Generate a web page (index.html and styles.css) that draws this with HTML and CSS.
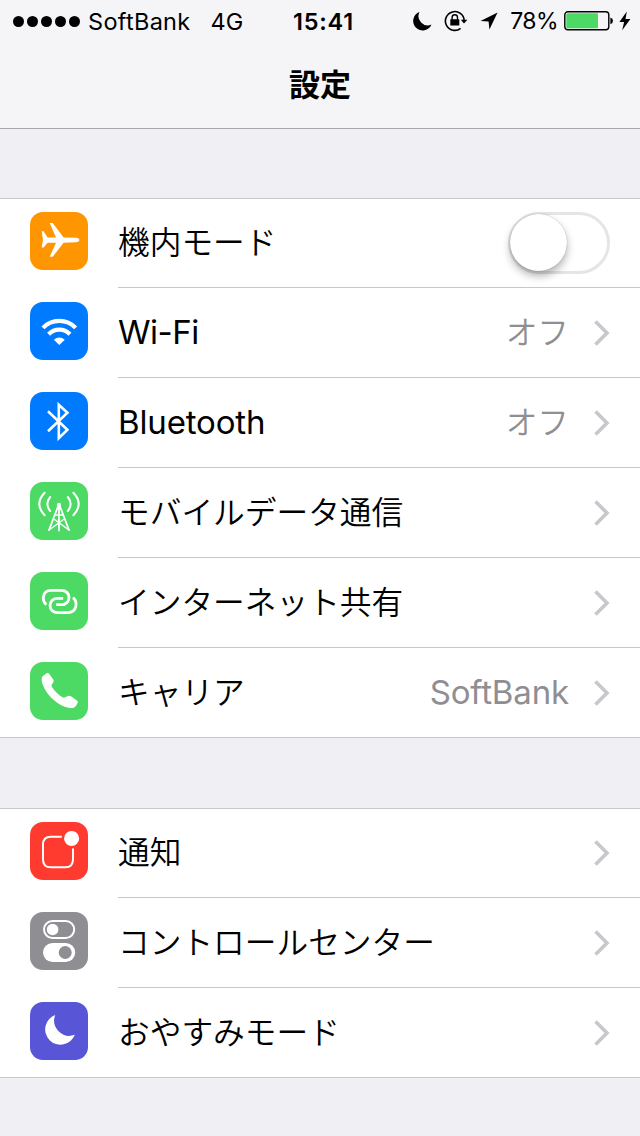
FILE: index.html
```html
<!DOCTYPE html>
<html lang="ja">
<head>
    <meta charset="UTF-8">
    <meta name="viewport" content="width=device-width, initial-scale=1.0">
    <title>設定</title>
    <link rel="stylesheet" href="styles.css">
</head>
<body>
    <header>
        <div class="status-bar">
            <div class="status-left">
                <div class="signal"><i></i><i></i><i></i><i></i><i></i></div>
                <span class="carrier">SoftBank</span>
                <span class="network">4G</span>
            </div>
            <div class="status-time">15:41</div>
            <div class="status-right">
                <svg class="dnd" width="19" height="20" viewBox="0 0 19 20">
                    <path d="M6.5 1A9.5 9.5 0 1 0 18.5 13.5A9.2 9.2 0 0 1 6.5 1Z"/>
                </svg>
                <svg class="lock" width="24" height="22" viewBox="0 0 24 22">
                    <path d="M20.2 10.5A9.4 9.4 0 1 0 16.6 18.4" fill="none" stroke="#000" stroke-width="1.6"/>
                    <path d="M16.8 9.7H23.4L20 13.6Z"/>
                    <rect x="6.3" y="9.2" width="9" height="6.4" rx="0.6"/>
                    <path d="M8.1 10V7.4A2.7 2.7 0 0 1 13.5 7.4V10" fill="none" stroke="#000" stroke-width="1.4"/>
                </svg>
                <svg class="location" width="18" height="18" viewBox="0 0 18 18">
                    <path d="M17.6 0.4L0.5 8.9L8.6 9.4L9.4 17.4Z"/>
                </svg>
                <span class="percent">78%</span>
                <svg class="battery" width="50" height="20" viewBox="0 0 50 20">
                    <rect x="0.8" y="0.8" width="44" height="18" rx="3" fill="none" stroke="#000" stroke-width="1.4"/>
                    <rect x="2.3" y="2.3" width="31.7" height="15" rx="1.4" fill="#4cd964"/>
                    <path d="M46.4 6.4Q49 7 49 9.8Q49 12.6 46.4 13.2Z"/>
                </svg>
                <svg class="bolt" width="12" height="20" viewBox="0 0 12 20">
                    <path d="M7.8 0.5L0.4 11H5.1L3.2 19.3L11.4 8H6.5Z"/>
                </svg>
            </div>
        </div>
        <h1>設定</h1>
    </header>

    <main>
        <ul class="group">
            <li class="row">
                <svg class="icon orange" viewBox="0 0 58 58">
                    <path d="M11.7 19.3H13.6L17.6 25.4H26L19.7 11H22.7L33.6 25.4L46 25.8Q49.4 26.4 49.4 28Q49.4 29.7 46 30.3L33.6 30.7L22.7 44.8H19.7L26 30.7H17.6L13.6 35.6H11.7L13 28Z" fill="#fff"/>
                </svg>
                <div class="row-body">
                    <span class="label">機内モード</span>
                    <div class="toggle"></div>
                </div>
            </li>
            <li class="row">
                <svg class="icon blue" viewBox="0 0 58 58">
                    <path d="M13 25.9A22.5 22.5 0 0 1 45.6 25.9" fill="none" stroke="#fff" stroke-width="4.2"/>
                    <path d="M18.6 32.2A15 15 0 0 1 40 32.2" fill="none" stroke="#fff" stroke-width="4.2"/>
                    <path d="M23.8 37.7Q29.3 33.2 34.8 37.7L29.3 43Z" fill="#fff"/>
                </svg>
                <div class="row-body">
                    <span class="label latin wifi">Wi-Fi</span>
                    <span class="value">オフ</span>
                    <svg class="chevron" viewBox="0 0 16 26"><path d="M1.5 1.5L13 13L1.5 24.5"/></svg>
                </div>
            </li>
            <li class="row">
                <svg class="icon blue" viewBox="0 0 58 58">
                    <path d="M18 19.3L37.4 37.8L28.8 46.2V12.7L37.4 20.8L18 39.2" fill="none" stroke="#fff" stroke-width="2.6"/>
                </svg>
                <div class="row-body">
                    <span class="label latin">Bluetooth</span>
                    <span class="value">オフ</span>
                    <svg class="chevron" viewBox="0 0 16 26"><path d="M1.5 1.5L13 13L1.5 24.5"/></svg>
                </div>
            </li>
            <li class="row">
                <svg class="icon green" viewBox="0 0 58 58">
                    <g fill="none" stroke="#fff" stroke-width="2" stroke-linecap="round">
                        <path d="M14.6 10.8Q4 22 14.6 33.2"/>
                        <path d="M43.4 10.8Q54 22 43.4 33.2"/>
                        <path d="M20.2 15Q14.5 22 20.2 29"/>
                        <path d="M37.8 15Q43.5 22 37.8 29"/>
                        <path d="M28.2 24L19 48M29.8 24L39 48M29 23V48.5" stroke-width="1.8"/>
                        <path d="M25.3 33H32.7M19 48L33.5 37.5M39 48L24.5 37.5" stroke-width="1.5"/>
                    </g>
                    <circle cx="29" cy="23" r="2.2" fill="#fff"/>
                </svg>
                <div class="row-body">
                    <span class="label">モバイルデータ通信</span>
                    <svg class="chevron" viewBox="0 0 16 26"><path d="M1.5 1.5L13 13L1.5 24.5"/></svg>
                </div>
            </li>
            <li class="row">
                <svg class="icon green" viewBox="0 0 58 58">
                    <g fill="none" stroke="#fff" stroke-width="2.8">
                        <path d="M16.4 32.6C11.4 28.5 12.4 18.4 21 18.4H31.5C35.8 18.4 39 21.4 39 25.3C39 29.2 36 32.7 32 32.7H26.2"/>
                        <path d="M43 25.6C48 29.7 47 40.6 38 40.6H27.5C23.2 40.6 20 37.6 20 33.7C20 29.8 23 26.3 27 26.3H33.2"/>
                    </g>
                </svg>
                <div class="row-body">
                    <span class="label">インターネット共有</span>
                    <svg class="chevron" viewBox="0 0 16 26"><path d="M1.5 1.5L13 13L1.5 24.5"/></svg>
                </div>
            </li>
            <li class="row">
                <svg class="icon green" viewBox="0 0 58 58">
                    <path d="M12.4 14.6L16.2 11.5Q18 10.4 19.3 12L23.3 17.4Q24.3 19 23.2 20.4L21.8 22.4Q21 23.6 21.9 25C24.6 29 28.6 32.8 32.4 35.2Q33.8 36 35.2 35.3L38 34.1Q39.5 33.5 41 34.3L47 38.4Q48.5 39.6 47.5 41.2L45.6 44.2Q44 46.5 40 46C26.5 44 13 29.5 11.7 18.2Q11.4 15.8 12.4 14.6Z" fill="#fff"/>
                </svg>
                <div class="row-body">
                    <span class="label">キャリア</span>
                    <span class="value latin">SoftBank</span>
                    <svg class="chevron" viewBox="0 0 16 26"><path d="M1.5 1.5L13 13L1.5 24.5"/></svg>
                </div>
            </li>
        </ul>

        <ul class="group">
            <li class="row">
                <svg class="icon red" viewBox="0 0 58 58">
                    <path d="M31.8 14.8H20.8Q13 14.8 13 22.6V37.4Q13 45.2 20.8 45.2H35.2Q43 45.2 43 37.4V26.6" fill="none" stroke="#fff" stroke-width="2"/>
                    <circle cx="41.6" cy="16.4" r="7.5" fill="#fff"/>
                </svg>
                <div class="row-body">
                    <span class="label">通知</span>
                    <svg class="chevron" viewBox="0 0 16 26"><path d="M1.5 1.5L13 13L1.5 24.5"/></svg>
                </div>
            </li>
            <li class="row">
                <svg class="icon gray" viewBox="0 0 58 58">
                    <rect x="14" y="9" width="30.2" height="17" rx="8.5" fill="none" stroke="#fff" stroke-width="2"/>
                    <circle cx="22.6" cy="17.5" r="5.8" fill="#fff"/>
                    <rect x="13" y="31" width="32.2" height="19" rx="9.5" fill="#fff"/>
                    <circle cx="35.2" cy="40.5" r="6.5" fill="#8e8e93"/>
                </svg>
                <div class="row-body">
                    <span class="label">コントロールセンター</span>
                    <svg class="chevron" viewBox="0 0 16 26"><path d="M1.5 1.5L13 13L1.5 24.5"/></svg>
                </div>
            </li>
            <li class="row">
                <svg class="icon purple" viewBox="0 0 58 58">
                    <path d="M25.3 13A15.3 15.3 0 1 0 44.8 32.8A15.2 15.2 0 0 1 25.3 13Z" fill="#fff"/>
                </svg>
                <div class="row-body">
                    <span class="label">おやすみモード</span>
                    <svg class="chevron" viewBox="0 0 16 26"><path d="M1.5 1.5L13 13L1.5 24.5"/></svg>
                </div>
            </li>
        </ul>
    </main>
</body>
</html>
```
FILE: styles.css
```css
:root {
    --bg-color: #efeff4;
    --bar-color: #f5f5f7;
    --line-color: #c8c7cc;
    --value-color: #8e8e93;
}

* {
    box-sizing: border-box;
}

body {
    margin: 0;
    min-height: 1136px;
    background-color: var(--bg-color);
    color: #000;
    font-family: Inter, "Noto Sans CJK JP", sans-serif;
}

header {
    height: 129px;
    background-color: var(--bar-color);
    border-bottom: 1px solid #a7a7ab;
}

/* Status bar */
.status-bar {
    display: grid;
    grid-template-columns: 1fr 70px 1fr;
    align-items: center;
    height: 41px;
    font-size: 23.5px;
    line-height: 41px;
    white-space: nowrap;
}

.status-left,
.status-right {
    display: flex;
    align-items: center;
}

.status-left {
    padding-left: 13px;
}

.signal {
    display: flex;
    gap: 3px;
    margin-right: 8px;
}

.signal i {
    width: 11px;
    height: 11px;
    border-radius: 50%;
    background-color: #000;
}

.carrier {
    margin-right: 20px;
    letter-spacing: 0.3px;
}

.status-time {
    padding-left: 7px;
    text-align: center;
    font-weight: 600;
    letter-spacing: 0.8px;
}

.status-right {
    justify-content: flex-end;
    padding-right: 9px;
}

.lock {
    margin-left: 12px;
}

.location {
    margin: 0 12px;
}

.percent {
    padding-top: 1px;
    font-size: 23px;
    letter-spacing: -0.6px;
}

.battery {
    margin: 0 5px 0 6px;
}

h1 {
    margin: 0;
    text-align: center;
    font-size: 31px;
    line-height: 83px;
    font-weight: 700;
    font-family: "Noto Sans CJK JP", sans-serif;
}

/* Settings list */
.group {
    list-style: none;
    margin: 69px 0 70px;
    padding: 0;
    background-color: #fff;
    box-shadow: inset 0 1px var(--line-color);
}

.group + .group {
    margin-top: 0;
}

.row {
    display: flex;
    height: 90px;
    padding-left: 30px;
}

.row:last-child {
    border-bottom: 1px solid var(--line-color);
}

.icon {
    flex: none;
    width: 58px;
    height: 58px;
    margin: 14px 30px 0 0;
    border-radius: 13px;
}

.orange { background-color: #ff9500; }
.blue { background-color: #007aff; }
.green { background-color: #4cd964; }
.red { background-color: #ff3b30; }
.gray { background-color: #8e8e93; }
.purple { background-color: #5856d6; }

.row-body {
    flex: 1;
    display: flex;
    align-items: center;
    padding-right: 30px;
    border-bottom: 1px solid var(--line-color);
}

.row:last-child .row-body {
    border-bottom: none;
}

.label,
.value {
    padding-bottom: 5px;
    font-family: "Noto Sans CJK JP DemiLight", "Noto Sans CJK JP", sans-serif;
    font-size: 31.7px;
    font-weight: 350;
    line-height: 44px;
    white-space: nowrap;
}

.label {
    flex: 1;
}

.value {
    color: var(--value-color);
}

.label.latin,
.value.latin {
    padding-bottom: 2px;
    font-family: Inter, sans-serif;
    font-size: 33px;
    font-weight: 400;
    letter-spacing: -0.15px;
}

.label.wifi {
    letter-spacing: -0.5px;
}

.chevron {
    width: 16px;
    height: 26px;
    margin-left: 25px;
    fill: none;
    stroke: #c7c7cc;
    stroke-width: 3.6;
}

.toggle {
    width: 102px;
    height: 62px;
    border: 3px solid #e5e5e5;
    border-radius: 31px;
}

.toggle::before {
    content: "";
    display: block;
    width: 57px;
    height: 57px;
    margin: -0.5px 0 0 -1px;
    border-radius: 50%;
    background-color: #fff;
    box-shadow: 0 0 1px rgba(0, 0, 0, 0.35), 0 5px 8px rgba(0, 0, 0, 0.3);
}
```
